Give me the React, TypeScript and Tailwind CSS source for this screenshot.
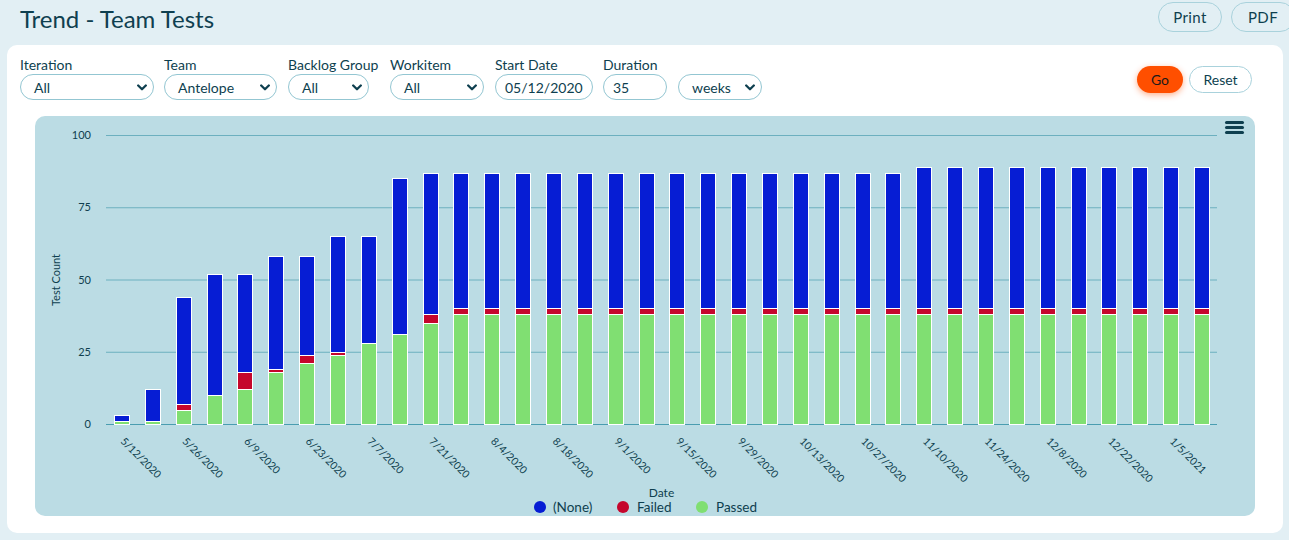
import React from 'react';

const ink = '#0e3f4f';

type Point = { passed: number; failed: number; none: number };

const early: Point[] = [
  { passed: 1, failed: 0, none: 2 },
  { passed: 1, failed: 0, none: 11 },
  { passed: 5, failed: 2, none: 37 },
  { passed: 10, failed: 0, none: 42 },
  { passed: 12, failed: 6, none: 34 },
  { passed: 18, failed: 1, none: 39 },
  { passed: 21, failed: 3, none: 34 },
  { passed: 24, failed: 1, none: 40 },
  { passed: 28, failed: 0, none: 37 },
  { passed: 31, failed: 0, none: 54 },
  { passed: 35, failed: 3, none: 49 },
];

const series: Point[] = [
  ...early,
  ...Array.from({ length: 15 }, () => ({ passed: 38, failed: 2, none: 47 })),
  ...Array.from({ length: 10 }, () => ({ passed: 38, failed: 2, none: 49 })),
];

const dates = series.map((_, i) => {
  const d = new Date(2020, 4, 12 + i * 7);
  return `${d.getMonth() + 1}/${d.getDate()}/${d.getFullYear()}`;
});

const Chevron = () => (
  <svg width="10" height="7" viewBox="0 0 10 7" className="shrink-0">
    <path d="M1.2 1.5 L5 5.2 L8.8 1.5" fill="none" stroke={ink} strokeWidth="2.3" strokeLinecap="round" strokeLinejoin="round" />
  </svg>
);

const Field: React.FC<{ label?: string; width: string; children: React.ReactNode }> = ({ label, width, children }) => (
  <div className={`flex flex-col ${width}`}>
    <div className="h-4 mb-[1px] text-[14px] leading-4 whitespace-nowrap" style={{ color: ink }}>{label ?? '\u00a0'}</div>
    {children}
  </div>
);

const SelectBox: React.FC<{ value: string }> = ({ value }) => (
  <div className="h-[26px] w-full rounded-full border border-[#93c6d2] flex items-center justify-between pl-[13px] pr-[6px] text-[14px] text-[#0e3f4f] bg-white">
    <span>{value}</span>
    <Chevron />
  </div>
);

const InputBox: React.FC<{ value: string }> = ({ value }) => (
  <div className="h-[26px] w-full rounded-full border border-[#93c6d2] flex items-center pl-[9px] text-[14px] text-[#0e3f4f] bg-white">
    {value}
  </div>
);

const Chart: React.FC = () => {
  const W = 1220;
  const H = 400;
  const left = 71;
  const right = 1182;
  const y0 = 308;
  const k = 2.89;
  const cat = (right - left) / series.length;
  const y = (v: number) => y0 - v * k;
  const ticks = [0, 25, 50, 75, 100];

  return (
    <svg width={W} height={H} viewBox={`0 0 ${W} ${H}`} style={{ fontFamily: 'Lato, "Liberation Sans", sans-serif' }}>
      {ticks.map((t) => (
        <g key={t}>
          <line x1={left} x2={right} y1={y(t) + 0.5} y2={y(t) + 0.5} stroke={t === 0 ? '#4a9db0' : '#6cb0bf'} strokeWidth="1" />
          <text x={56} y={y(t) + 4} textAnchor="end" fontSize="11" fill={ink}>{t}</text>
        </g>
      ))}
      <text transform="translate(25,164) rotate(-90)" textAnchor="middle" fontSize="11" fill={ink}>Test Count</text>

      {series.map((p, i) => {
        const cx = left + cat * (i + 0.5);
        const x = Math.round(cx - 7.5) + 0.5;
        const segs = [
          { v0: 0, v1: p.passed, c: '#80df72' },
          { v0: p.passed, v1: p.passed + p.failed, c: '#c5062c' },
          { v0: p.passed + p.failed, v1: p.passed + p.failed + p.none, c: '#061dd4' },
        ];
        return (
          <g key={i}>
            {segs.filter((s) => s.v1 > s.v0).map((s, j) => (
              <rect key={j} x={x} y={Math.round(y(s.v1)) + 0.5} width={15} height={Math.round(y(s.v0)) - Math.round(y(s.v1))} fill={s.c} stroke="#ffffff" strokeWidth="1" />
            ))}
          </g>
        );
      })}

      {series.map((_, i) =>
        i % 2 === 0 ? (
          <text key={i} transform={`translate(${left + cat * (i + 0.5) - 1.5},326) rotate(45)`} fontSize="10.5" fill={ink}>
            {dates[i]}
          </text>
        ) : null
      )}

      <text x={626.5} y={381} textAnchor="middle" fontSize="12" fill={ink}>Date</text>

      <circle cx={505} cy={391} r={6} fill="#061dd4" />
      <text x={518} y={395.5} fontSize="13.5" fill={ink}>(None)</text>
      <circle cx={588} cy={391} r={6} fill="#c5062c" />
      <text x={602} y={395.5} fontSize="13.5" fill={ink}>Failed</text>
      <circle cx={667} cy={391} r={6} fill="#80df72" />
      <text x={681} y={395.5} fontSize="13.5" fill={ink}>Passed</text>

      <g stroke={ink} strokeWidth="3" strokeLinecap="round">
        <line x1={1191.5} x2={1207.5} y1={6.5} y2={6.5} />
        <line x1={1191.5} x2={1207.5} y1={11.5} y2={11.5} />
        <line x1={1191.5} x2={1207.5} y1={16.5} y2={16.5} />
      </g>
    </svg>
  );
};

const App: React.FC = () => {
  return (
    <div className="w-full h-[540px] overflow-hidden bg-[#e2eff4] text-[#0e3f4f] font-['Lato','Liberation_Sans',sans-serif]">
      {/* Header */}
      <header className="h-[45px] flex justify-between items-start">
        <h1 className="pl-5 pt-[5px] text-[24px] leading-7 font-normal text-[#0f4050]">Trend - Team Tests</h1>
        <div className="flex gap-[9px] pt-[2px] mr-[-6px]">
          <button className="h-[30px] w-[64px] rounded-full border border-[#a9d2dc] text-[15px] tracking-wide text-[#0e3f4f]">Print</button>
          <button className="h-[30px] w-[64px] rounded-full border border-[#a9d2dc] text-[15px] tracking-wide text-[#0e3f4f]">PDF</button>
        </div>
      </header>

      {/* Card */}
      <div className="mx-[7px] mr-[6px] h-[488px] rounded-[10px] bg-white pt-3">
        <div className="flex items-start justify-between pl-[13px] pr-[31px]">
          <div className="flex gap-[10px]">
            <Field label="Iteration" width="w-[134px]"><SelectBox value="All" /></Field>
            <Field label="Team" width="w-[114px]"><div className="w-[113px]"><SelectBox value="Antelope" /></div></Field>
            <Field label="Backlog Group" width="w-[92px]"><div className="w-[81px]"><SelectBox value="All" /></div></Field>
            <Field label="Workitem" width="w-[95px]"><div className="w-[94px]"><SelectBox value="All" /></div></Field>
            <Field label="Start Date" width="w-[98px]"><InputBox value="05/12/2020" /></Field>
            <Field label="Duration" width="w-[65px]"><div className="w-[64px]"><InputBox value="35" /></div></Field>
            <Field width="w-[84px]"><SelectBox value="weeks" /></Field>
          </div>
          <div className="flex gap-[6px] mt-[9px]">
            <button className="h-[27px] w-[46px] rounded-full bg-[#ff4f00] text-[14px] text-[#1a1a1a] shadow-[0_2px_6px_rgba(255,79,0,0.45)]">Go</button>
            <button className="h-[27px] w-[63px] rounded-full border border-[#a9d2dc] bg-white text-[14px] text-[#0e3f4f]">Reset</button>
          </div>
        </div>

        <div className="mt-4 mx-[28px] h-[400px] rounded-[10px] bg-[#bbdce4] overflow-hidden">
          <Chart />
        </div>
      </div>
    </div>
  );
};

export default App;
